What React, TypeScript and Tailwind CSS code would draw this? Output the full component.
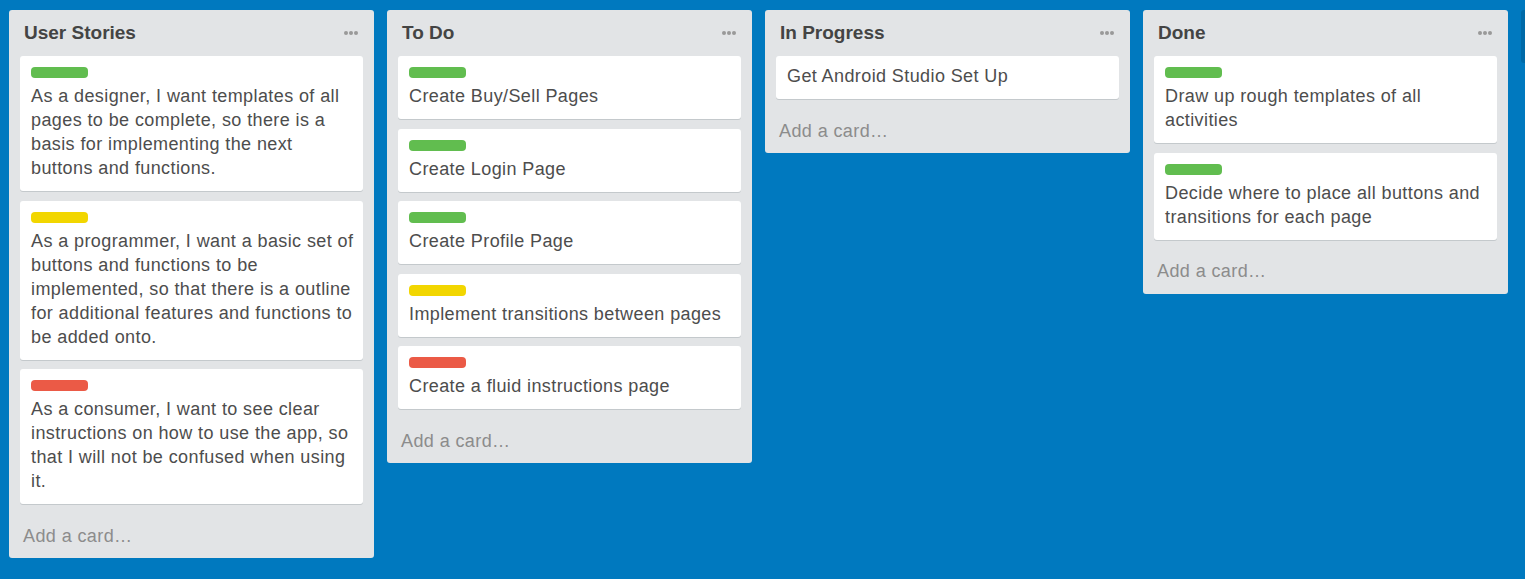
import React from "react";

type Card = { label?: "green" | "yellow" | "red"; text: string };
type List = { title: string; cards: Card[] };

const lists: List[] = [
  {
    title: "User Stories",
    cards: [
      {
        label: "green",
        text: "As a designer, I want templates of all pages to be complete, so there is a basis for implementing the next buttons and functions.",
      },
      {
        label: "yellow",
        text: "As a programmer, I want a basic set of buttons and functions to be implemented, so that there is a outline for additional features and functions to be added onto.",
      },
      {
        label: "red",
        text: "As a consumer, I want to see clear instructions on how to use the app, so that I will not be confused when using it.",
      },
    ],
  },
  {
    title: "To Do",
    cards: [
      { label: "green", text: "Create Buy/Sell Pages" },
      { label: "green", text: "Create Login Page" },
      { label: "green", text: "Create Profile Page" },
      { label: "yellow", text: "Implement transitions between pages" },
      { label: "red", text: "Create a fluid instructions page" },
    ],
  },
  {
    title: "In Progress",
    cards: [{ text: "Get Android Studio Set Up" }],
  },
  {
    title: "Done",
    cards: [
      { label: "green", text: "Draw up rough templates of all activities" },
      { label: "green", text: "Decide where to place all buttons and transitions for each page" },
    ],
  },
];

function Label({ color }: { color: "green" | "yellow" | "red" }) {
  const cls =
    color === "green"
      ? "bg-[#61bd4f]"
      : color === "yellow"
      ? "bg-[#f2d600]"
      : "bg-[#eb5a46]";
  return <div className={`mt-[3px] mb-[6px] h-[11px] w-[57px] rounded-[4px] ${cls}`} />;
}

function CardView({ card }: { card: Card }) {
  return (
    <div className="rounded-[3px] bg-white pt-[8px] pb-[11px] pl-[11px] pr-[6px] shadow-[0_1px_0_#c4c9cc]">
      {card.label && <Label color={card.label} />}
      <div className="text-[18px] leading-[24px] tracking-[0.4px] text-[#4d4d4d]">{card.text}</div>
    </div>
  );
}

function Dots() {
  return (
    <div className="flex gap-[1px]">
      <span className="block h-[4px] w-[4px] rounded-full bg-[#999]" />
      <span className="block h-[4px] w-[4px] rounded-full bg-[#999]" />
      <span className="block h-[4px] w-[4px] rounded-full bg-[#999]" />
    </div>
  );
}

function ListView({ list }: { list: List }) {
  return (
    <div className="w-[365px] shrink-0 rounded-[3px] bg-[#e2e4e6] px-[11px]">
      <div className="flex h-[46px] items-center justify-between pl-[4px] pr-[5px]">
        <div className="text-[19px] font-bold leading-[24px] text-[#444]">{list.title}</div>
        <Dots />
      </div>
      <div className="flex flex-col gap-[9.5px]">
        {list.cards.map((c, i) => (
          <CardView key={i} card={c} />
        ))}
      </div>
      <div className="mt-[9.5px] pt-[10px] pb-[10.5px] pl-[3px] text-[18px] leading-[24px] tracking-[0.4px] text-[#8c8c8c]">
        Add a card…
      </div>
    </div>
  );
}

export default function App() {
  return (
    <div
      className="flex h-[579px] w-full items-start gap-[13px] overflow-hidden bg-[#0079bf] pl-[9px] pt-[10px]"
      style={{ fontFamily: '"Liberation Sans", Arial, sans-serif' }}
    >
      {lists.map((l, i) => (
        <ListView key={i} list={l} />
      ))}
      <div className="h-[53px] w-[300px] shrink-0 rounded-[3px] bg-[#006aa8]" />
    </div>
  );
}
